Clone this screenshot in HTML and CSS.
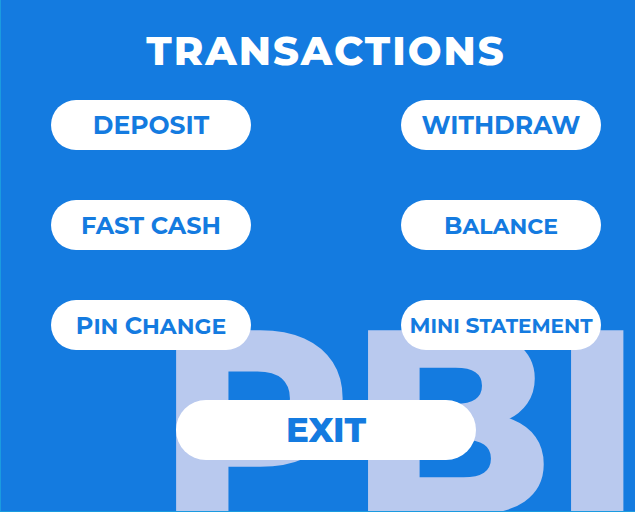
FILE: index.html
```html
<!DOCTYPE html>
<html lang="en">
<head>
<meta charset="utf-8">
<meta name="viewport" content="width=device-width, initial-scale=1">
<title>Transactions</title>
<link rel="stylesheet" href="styles.css">
</head>
<body>
<main class="screen">
  <div class="watermark" aria-hidden="true">PBI</div>
  <h1 class="title">TRANSACTIONS</h1>
  <div class="actions">
    <button type="button" class="pill large">DEPOSIT</button>
    <button type="button" class="pill large">WITHDRAW</button>
    <button type="button" class="pill medium">FAST CASH</button>
    <button type="button" class="pill caps"><span><b>B</b>ALANCE</span></button>
    <button type="button" class="pill caps"><span><b>P</b>IN <b>C</b>HANGE</span></button>
    <button type="button" class="pill caps compact"><span><b>M</b>INI <b>S</b>TATEMENT</span></button>
  </div>
  <button type="button" class="pill exit">EXIT</button>
</main>
</body>
</html>
```
FILE: styles.css
```css
* {
  box-sizing: border-box;
}

body {
  margin: 0;
  font-family: Montserrat, Inter, "Open Sans", sans-serif;
}

.screen {
  position: relative;
  min-height: 100vh;
  padding: 30px 34px 51px 50px;
  overflow: hidden;
  display: flex;
  flex-direction: column;
  align-items: center;
  background: #147be0;
  border-left: 1px solid #1a9be0;
  border-bottom: 1px solid #1a9be0;
}

.title {
  margin: 0 0 28px;
  color: #fff;
  font-size: 40px;
  line-height: 42px;
  font-weight: 800;
  letter-spacing: 2px;
}

.actions {
  position: relative;
  align-self: stretch;
  display: grid;
  grid-template-columns: 200px 200px;
  justify-content: space-between;
  row-gap: 50px;
}

.pill {
  position: relative;
  height: 50px;
  padding: 0;
  border: 0;
  border-radius: 25px;
  background: #fff;
  color: #147be0;
  font-family: inherit;
  font-weight: 700;
  white-space: nowrap;
  cursor: pointer;
}

.large {
  font-size: 25px;
}

.medium {
  font-size: 24px;
}

.caps {
  font-size: 22px;
}

.caps b {
  font-size: 24px;
  font-weight: 700;
}

.compact {
  font-size: 20px;
}

.compact b {
  font-size: 22px;
}

.exit {
  width: 300px;
  height: 60px;
  margin-top: 50px;
  border-radius: 30px;
  font-size: 34px;
  font-weight: 800;
}

/* Oversized bank initials behind the controls */
.watermark {
  position: absolute;
  top: 288px;
  right: -7px;
  color: #b9c9ee;
  font-size: 264px;
  line-height: 264px;
  font-weight: 800;
  user-select: none;
}
```
